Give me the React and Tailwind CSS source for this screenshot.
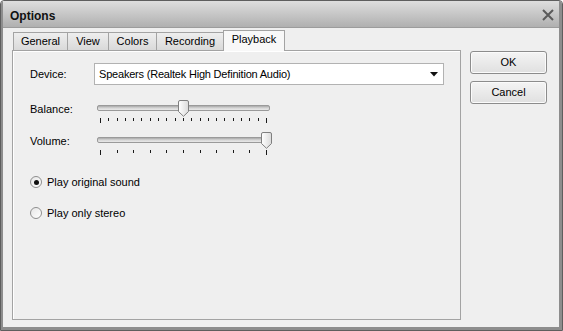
import React from 'react';

const font = { fontFamily: '"Liberation Sans", Arial, sans-serif' };

const tabs = [
    { label: "General", w: "w-[55px]" },
    { label: "View", w: "w-[42px]" },
    { label: "Colors", w: "w-[49px]" },
    { label: "Recording", w: "w-[68px]" },
];

const Slider = ({ pos, ticks }) => {
    return (
        <div className="relative w-[173px] h-[24px]">
            {/* groove */}
            <div className="absolute left-0 right-0 top-[5px] h-[6px] rounded-[2px] border border-[#9a9a9a] bg-gradient-to-b from-[#a8a8a8] via-[#d6d6d6] to-[#e9e9e9]"></div>
            {/* thumb */}
            <svg className="absolute top-0" style={{ left: pos - 5.5 }} width="11" height="17" viewBox="0 0 11 17">
                <defs>
                    <linearGradient id="thumbg" x1="0" y1="0" x2="1" y2="0">
                        <stop offset="0" stopColor="#ffffff" />
                        <stop offset="1" stopColor="#dadada" />
                    </linearGradient>
                </defs>
                <path d="M2,0.5 H9 Q10.5,0.5 10.5,2 V11.5 L5.5,16.3 L0.5,11.5 V2 Q0.5,0.5 2,0.5 Z" fill="url(#thumbg)" stroke="#7f7f7f" />
            </svg>
            {/* ticks */}
            <div className="absolute left-[3px] right-[3px] top-[18px] flex justify-between items-start">
                {Array.from({ length: ticks }).map((_, i) => (
                    <div key={i} className={`w-px bg-[#1a1a1a] ${i === 0 || i === ticks - 1 ? 'h-[5px]' : 'h-[3px]'}`}></div>
                ))}
            </div>
        </div>
    );
};

const Radio = ({ checked, label }) => (
    <div className="flex items-center gap-[5px] h-[14px]">
        <div className="w-[12px] h-[12px] rounded-full border border-[#8e8e8e] bg-gradient-to-br from-[#e6e6e6] to-[#ffffff] flex items-center justify-center">
            {checked && <div className="w-[5px] h-[5px] rounded-full bg-[#111]"></div>}
        </div>
        <span>{label}</span>
    </div>
);

const Button = ({ children }) => (
    <button className="w-[77px] h-[23px] rounded-[3px] border border-[#8c8c8c] bg-gradient-to-b from-[#f4f4f4] to-[#e0e0e0] shadow-[inset_0_0_0_1px_#fbfbfb] text-[11px] text-black flex items-center justify-center">
        {children}
    </button>
);

export default function App() {
    return (
        <div className="w-[563px] h-[331px] bg-white text-[11px] text-black" style={font}>
            <div className="w-full h-full flex flex-col border border-[#5e5e5e] rounded-t-[4px] overflow-hidden">
                <div className="flex-1 flex flex-col border-l-2 border-r-[3px] border-b-[3px] border-[#8d8d8d]">
                    {/* Title bar */}
                    <div className="h-[26px] shrink-0 flex items-center justify-between pl-[7px] pr-[4px] bg-gradient-to-b from-[#dedede] to-[#b0b0b0]">
                        <span className="text-[12px] font-bold text-[#111] pt-[3px]">Options</span>
                        <svg width="14" height="14" viewBox="0 0 14 14" className="mt-[2px]">
                            <path d="M2,2 L12,12 M12,2 L2,12" stroke="#5a5a5a" strokeWidth="2" />
                        </svg>
                    </div>

                    {/* Client */}
                    <div className="flex-1 bg-[#efefef] flex pl-[9px] pt-px pb-[7px] border-t border-[#9c9c9c]">
                        <div className="w-[449px] flex flex-col">
                            {/* Tabs */}
                            <div className="h-[21px] flex items-end pl-px relative z-10">
                                {tabs.map(t => (
                                    <div key={t.label} className={`${t.w} h-[18px] -mr-px border border-b-0 border-[#a3a3a3] bg-gradient-to-b from-[#eeeeee] to-[#d9d9d9] flex items-center justify-center pb-[1px]`}>
                                        {t.label}
                                    </div>
                                ))}
                                <div className="w-[62px] h-[21px] border border-b-0 border-[#a3a3a3] bg-[#f8f8f8] flex items-center justify-center -mb-px pb-[3px]">
                                    Playback
                                </div>
                            </div>
                            {/* Panel */}
                            <div className="flex-1 border border-[#a3a3a3] bg-[#efefef] shadow-[inset_1px_1px_0_#ffffff] pl-[17px] pt-[12px]">
                                <div className="grid grid-cols-[64px_auto] items-center">
                                    <span>Device:</span>
                                    <div className="w-[350px] h-[22px] bg-white border border-[#b2b2b2] flex items-center justify-between pl-[4px] pr-[5px]">
                                        <span className="tracking-[-0.2px]">Speakers (Realtek High Definition Audio)</span>
                                        <svg width="8" height="5" viewBox="0 0 8 5">
                                            <path d="M0,0 H8 L4,4.5 Z" fill="#111" />
                                        </svg>
                                    </div>
                                </div>
                                <div className="grid grid-cols-[67px_auto] mt-[15px]">
                                    <span className="mt-[1px]">Balance:</span>
                                    <Slider pos={86} ticks={21} />
                                </div>
                                <div className="grid grid-cols-[67px_auto] mt-[8px]">
                                    <span className="mt-[1px]">Volume:</span>
                                    <Slider pos={169} ticks={11} />
                                </div>
                                <div className="mt-[19px] flex flex-col gap-[17px]">
                                    <Radio checked label="Play original sound" />
                                    <Radio label="Play only stereo" />
                                </div>
                            </div>
                        </div>
                        <div className="ml-[9px] pt-[22px] flex flex-col gap-[7px]">
                            <Button>OK</Button>
                            <Button>Cancel</Button>
                        </div>
                    </div>
                </div>
            </div>
        </div>
    );
}
